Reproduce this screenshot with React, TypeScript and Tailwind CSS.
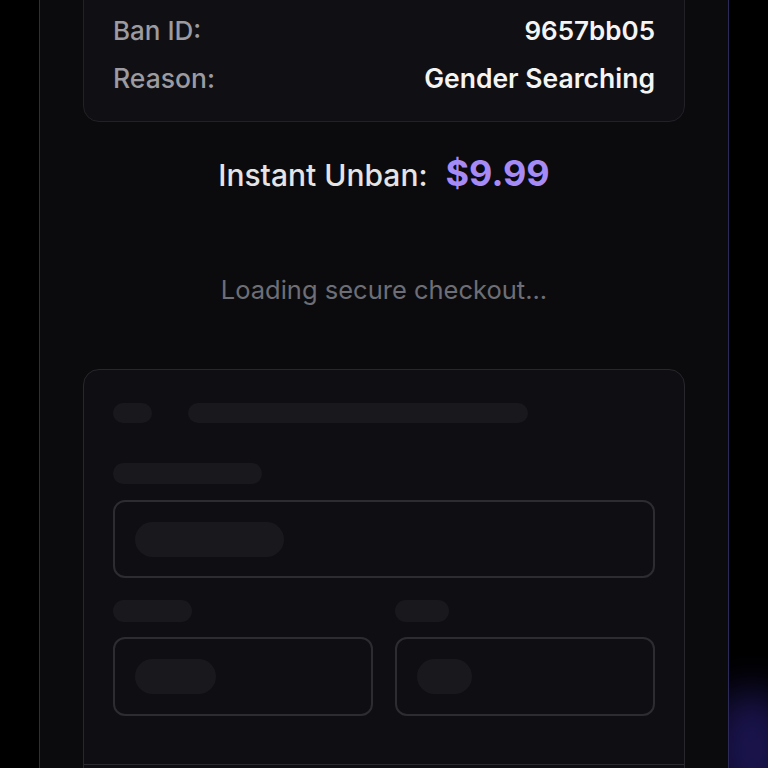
import React from "react";

export default function App() {
  return (
    <div
      className="relative w-full h-[768px] overflow-hidden bg-black"
      style={{ fontFamily: "Inter, 'Noto Sans', sans-serif" }}
    >
      <div className="pointer-events-none absolute left-[712px] top-[690px] h-[120px] w-[80px] rounded-full bg-[#34289a] opacity-50 blur-[20px]" />
      <div className="relative ml-[39px] h-[800px] w-[690px] border-x border-[#2c2a58] bg-[#0b0b0e] px-[43px]">
        {/* Info box */}
        <div className="-mt-[17px] rounded-[16px] border border-[#222226] bg-[#101014] px-[29px] pt-[29px] pb-[25px]">
          <div className="flex flex-col gap-[11px]">
            <div className="flex items-center justify-between text-[26px] leading-[36px]">
              <span className="font-medium text-[#9b9ba1]">Ban ID:</span>
              <span className="font-semibold text-[#f4f4f5]">9657bb05</span>
            </div>
            <div className="flex items-center justify-between text-[26.5px] leading-[36px]">
              <span className="font-medium text-[#9b9ba1]">Reason:</span>
              <span className="font-semibold text-[#f4f4f5]">Gender Searching</span>
            </div>
          </div>
        </div>

        {/* Price */}
        <div className="mt-[31px] flex items-baseline justify-center gap-[18px] leading-[40px]">
          <span className="text-[30px] font-medium text-[#e4e4e7]">Instant Unban:</span>
          <span className="text-[36px] font-bold text-[#a68af5]">$9.99</span>
        </div>

        {/* Loading */}
        <div className="mt-[78px] text-center text-[25.5px] leading-[34px] text-[#6e6e76]">
          Loading secure checkout...
        </div>

        {/* Skeleton */}
        <div className="mt-[62px] h-[420px] rounded-[16px] border border-[#27272c] bg-[#0f0f13] px-[29px] pt-[33px]">
          <div className="flex items-center gap-[36px]">
            <div className="h-[20px] w-[39px] rounded-full bg-[#19191d]" />
            <div className="h-[20px] w-[340px] rounded-full bg-[#19191d]" />
          </div>
          <div className="mt-[40px] h-[21px] w-[149px] rounded-full bg-[#19191d]" />
          <div className="mt-[16px] flex h-[78px] items-center rounded-[12px] border-2 border-[#2c2c31] px-[20px]">
            <div className="h-[35px] w-[149px] rounded-full bg-[#19191d]" />
          </div>
          <div className="mt-[22px] grid grid-cols-2 gap-x-[22px]">
            <div>
              <div className="h-[22px] w-[79px] rounded-full bg-[#19191d]" />
              <div className="mt-[15px] flex h-[79px] items-center rounded-[12px] border-2 border-[#2c2c31] px-[20px]">
                <div className="h-[35px] w-[81px] rounded-full bg-[#19191d]" />
              </div>
            </div>
            <div>
              <div className="h-[22px] w-[54px] rounded-full bg-[#19191d]" />
              <div className="mt-[15px] flex h-[79px] items-center rounded-[12px] border-2 border-[#2c2c31] px-[20px]">
                <div className="h-[35px] w-[55px] rounded-full bg-[#19191d]" />
              </div>
            </div>
          </div>
          <div className="-mx-[29px] mt-[48px] border-t border-[#2a2a2f]" />
        </div>
      </div>
    </div>
  );
}
